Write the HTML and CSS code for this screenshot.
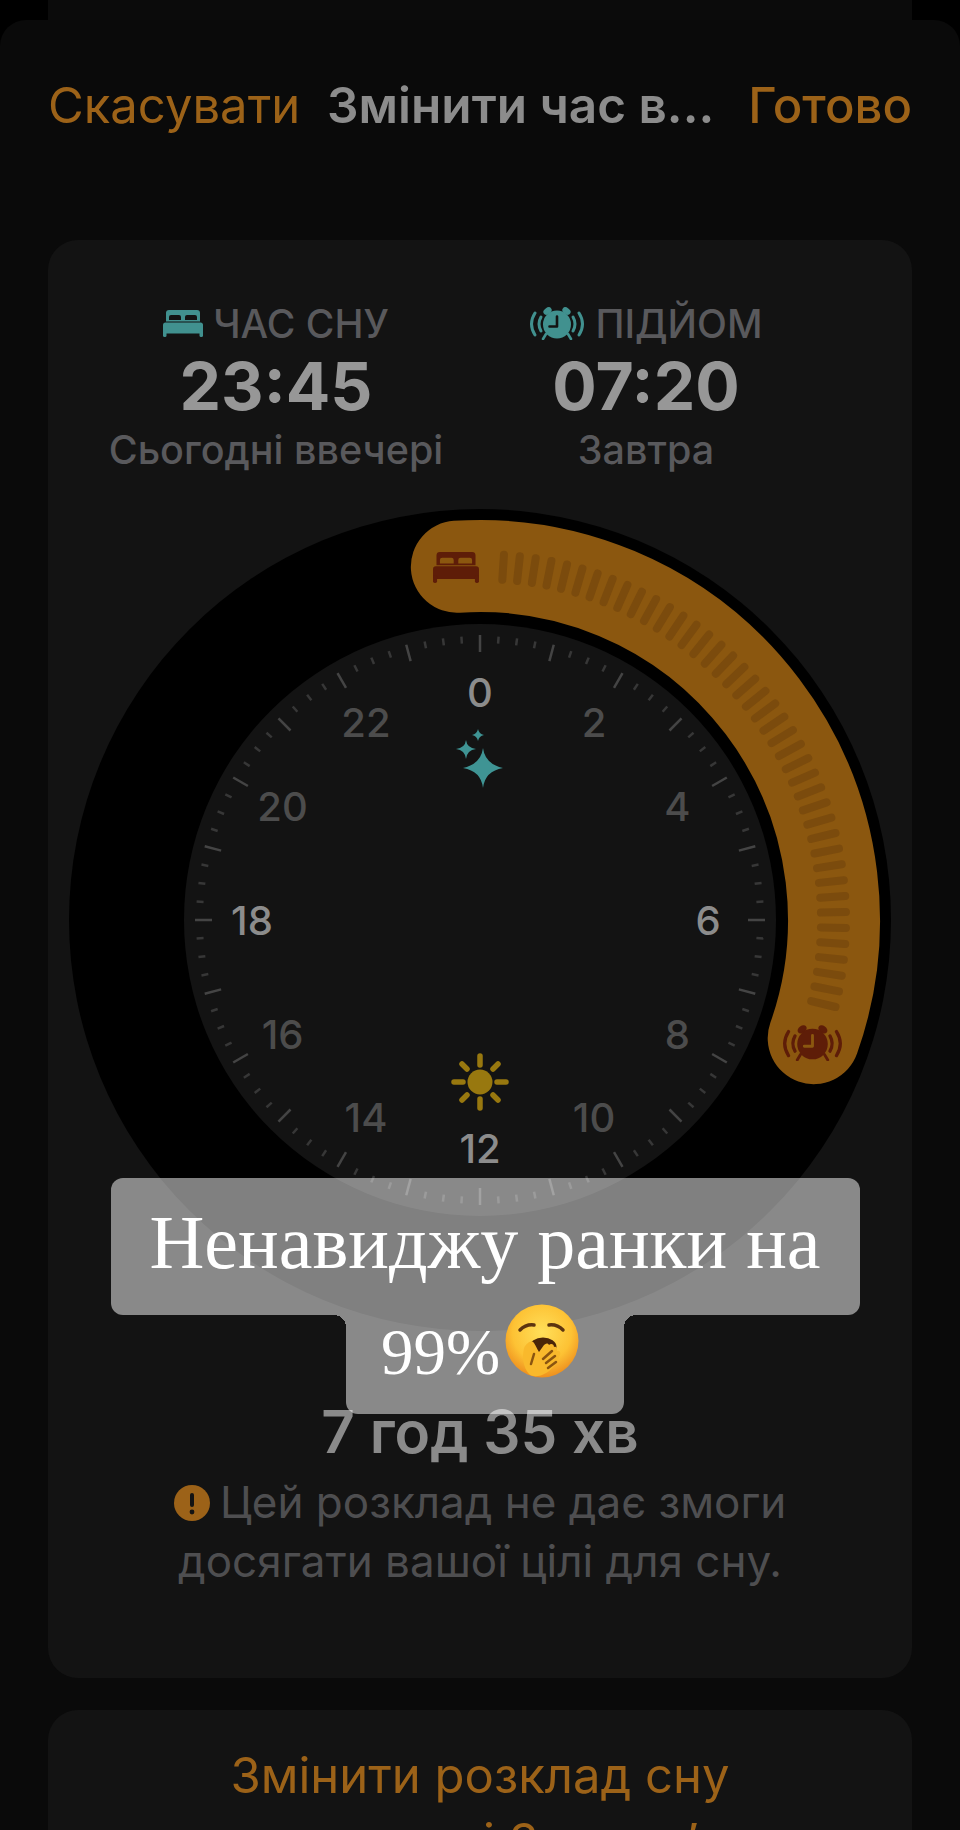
FILE: index.html
```html
<!DOCTYPE html>
<html lang="uk">
<head>
    <meta charset="UTF-8">
    <meta name="viewport" content="width=device-width, initial-scale=1.0">
    <title>Змінити час сну</title>
    <link rel="stylesheet" href="styles.css">
</head>
<body>
    <svg class="icon-defs" width="0" height="0">
        <symbol id="bed" viewBox="0 0 40 27">
            <path fill-rule="evenodd" d="M6 0h28a3 3 0 0 1 3 3v8.500H3V3a3 3 0 0 1 3-3zM8 5a2 2 0 0 0-2 2v3h12V7a2 2 0 0 0-2-2zM24 5a2 2 0 0 0-2 2v3h12V7a2 2 0 0 0-2-2z"/>
            <rect x="0" y="12.500" width="40" height="11" rx="2.500"/>
            <rect x="0" y="20" width="3.500" height="7" rx="1.500"/>
            <rect x="36.500" y="20" width="3.500" height="7" rx="1.500"/>
        </symbol>
        <symbol id="alarm" viewBox="0 0 56 33">
            <ellipse cx="18.500" cy="4" rx="4.500" ry="3.200" transform="rotate(-35 18.500 4)"/>
            <ellipse cx="37.500" cy="4" rx="4.500" ry="3.200" transform="rotate(35 37.500 4)"/>
            <path d="M17 27l-3 5M39 27l3 5" stroke="currentColor" stroke-width="2.600" stroke-linecap="round"/>
            <circle cx="28" cy="17.500" r="14"/>
            <path class="alarm-hands" d="M28 9.500v10h-7.500"/>
            <g class="alarm-waves">
                <path d="M6 6Q-1 17 6 28"/>
                <path d="M12 10Q8 17 12 24"/>
                <path d="M50 6Q57 17 50 28"/>
                <path d="M44 10Q48 17 44 24"/>
            </g>
        </symbol>
    </svg>

    <div class="peek"></div>
    <main class="sheet">
        <header class="top-bar">
            <span class="top-action">Скасувати</span>
            <span class="top-title">Змінити час в...</span>
            <span class="top-action top-done">Готово</span>
        </header>

        <section class="card schedule">
            <div class="times">
                <div class="time-col">
                    <p class="time-label">
                        <svg class="label-icon bed-icon"><use href="#bed"/></svg>
                        ЧАС СНУ
                    </p>
                    <p class="time-value">23:45</p>
                    <p class="time-day">Сьогодні ввечері</p>
                </div>
                <div class="time-col">
                    <p class="time-label">
                        <svg class="label-icon alarm-icon"><use href="#alarm"/></svg>
                        ПІДЙОМ
                    </p>
                    <p class="time-value">07:20</p>
                    <p class="time-day">Завтра</p>
                </div>
            </div>

            <svg class="dial" id="dial" viewBox="0 0 864 840" width="864" height="840">
                <circle cx="432" cy="420" r="411" class="dial-ring"/>
                <circle cx="432" cy="420" r="296" class="dial-face"/>
                <g id="face-ticks"></g>
                <g id="face-labels"></g>

                <path class="sparkle" d="M435 248q2 16 20 20q-18 3-20 20q-2-17-20-20q18-4 20-20z"/>
                <path class="sparkle" d="M418 240q1 8 10 9q-9 1-10 10q-1-9-10-10q9-1 10-9z"/>
                <path class="sparkle" d="M430 229q1 5 6 6q-5 1-6 6q-1-5-6-6q5-1 6-6z"/>

                <g class="sun">
                    <circle cx="432" cy="582" r="12.500"/>
                    <path d="M432 556v9M432 599v9M406 582h9M449 582h9M414 564l5 5M445 595l5 5M450 564l-5 5M419 595l-5 5"/>
                </g>

                <path id="sleep-arc" class="sleep-arc"/>
                <g id="arc-ticks"></g>
                <use href="#bed" class="arc-icon" x="385" y="52" width="46" height="31"/>
                <use href="#alarm" class="arc-icon arc-alarm" x="733" y="525" width="63" height="36"/>
            </svg>

            <p class="duration">7 год 35 хв</p>
            <p class="warning">
                <svg class="warning-icon" viewBox="0 0 36 36">
                    <circle cx="18" cy="18" r="18"/>
                    <rect x="16" y="8" width="4" height="14" rx="2" class="warning-mark"/>
                    <circle cx="18" cy="27" r="2.400" class="warning-mark"/>
                </svg>
                Цей розклад не дає змоги<br>досягати вашої цілі для сну.
            </p>
        </section>

        <section class="card change">
            <p>Змінити розклад сну<br>у програмі Здоров’я</p>
        </section>
    </main>

    <div class="sticker">
        <div class="sticker-line sticker-wide">Ненавиджу ранки на</div>
        <div class="sticker-line sticker-narrow">
            <span class="sticker-percent">99%</span>
            <svg class="yawn" viewBox="0 0 74 74">
                <defs>
                    <radialGradient id="yawn-face" cx="50%" cy="38%" r="62%">
                        <stop offset="0" stop-color="#ffdf5a"/>
                        <stop offset="0.65" stop-color="#fdc234"/>
                        <stop offset="1" stop-color="#ee8f1e"/>
                    </radialGradient>
                </defs>
                <circle cx="37" cy="37" r="36.500" fill="url(#yawn-face)"/>
                <path class="yawn-eye" d="M15 26q6-6 14-5"/>
                <path class="yawn-eye" d="M44 21q8-1 14 5"/>
                <ellipse cx="38" cy="43" rx="13.500" ry="9.500" fill="#4a2508"/>
                <path class="yawn-hand" d="M19 44c-2 9-1 19 5 26c3 3 10 3 15 0c7-3 13-10 16-19c1-3-1-5-3-4c1-3-1-5-3-4c0-3-3-4-5-2c-1-2-3-2-5 0l-5 7c-2-3-3-6-5-9c-2-3-5-1-6 0c-2 1-3 3-4 5z"/>
                <path class="yawn-gap" d="M29 50l-3 10M38 55l9-8M41 59l9-7M43 64l8-6"/>
            </svg>
        </div>
    </div>

    <script src="script.js"></script>
</body>
</html>
```

FILE: styles.css
```css
*{
    margin: 0;
    padding: 0;
    box-sizing: border-box;
    font-family: Inter, "Noto Sans", sans-serif;
}
html, body{
    height: 1830px;
    overflow: hidden;
}
body{
    position: relative;
    background: #000;
}
.icon-defs{
    position: absolute;
}
.peek{
    height: 20px;
    margin: 0 48px;
    background: #0b0b0b;
}
.sheet{
    padding: 57px 48px 0;
    background: #0a0a0a;
    border-radius: 26px 26px 0 0;
}
.top-bar{
    display: flex;
    align-items: center;
    justify-content: space-between;
    height: 56px;
    margin-bottom: 107px;
    font-size: 49px;
}
.top-action{
    color: #9c6218;
}
.top-done{
    font-weight: 500;
}
.top-title{
    margin-right: 7px;
    color: #8c8c8c;
    font-weight: 600;
    font-size: 49.500px;
}
.card{
    background: #131313;
    border-radius: 30px;
}
.schedule{
    height: 1438px;
    padding-top: 63px;
}
.times{
    display: grid;
    grid-template-columns: 370px 370px;
    padding-left: 43px;
}
.time-col{
    text-align: center;
}
.time-label{
    display: flex;
    align-items: center;
    justify-content: center;
    gap: 10px;
    height: 40px;
    font-size: 39px;
    font-weight: 500;
    color: #59595c;
}
.label-icon{
    color: #41918f;
    fill: currentColor;
}
.bed-icon{
    width: 40px;
    height: 27px;
    margin-top: 1px;
}
.alarm-icon{
    width: 56px;
    height: 33px;
    --hands: #131313;
}
.time-value{
    margin-top: 11px;
    font-size: 66px;
    line-height: 64px;
    font-weight: 700;
    color: #979797;
}
.time-day{
    margin-top: 10px;
    font-size: 39.500px;
    line-height: 44px;
    font-weight: 500;
    color: #59595c;
}
.dial{
    display: block;
    margin-top: 28px;
}
.dial-ring{
    fill: #000;
}
.dial-face{
    fill: #131313;
}
.tick-long{
    stroke: #444;
    stroke-width: 2.500;
}
.tick-short{
    stroke: #373737;
    stroke-width: 2.500;
}
.hour{
    font-size: 40px;
    font-weight: 500;
    text-anchor: middle;
    dominant-baseline: central;
    fill: #4c4c4c;
}
.hour-main{
    fill: #8c8c8c;
}
.sparkle{
    fill: #3f9494;
}
.sun{
    fill: #98780f;
}
.sun path{
    fill: none;
    stroke: #98780f;
    stroke-width: 5.500;
    stroke-linecap: round;
}
.sleep-arc{
    fill: none;
    stroke: #8b570f;
    stroke-width: 92;
    stroke-linecap: round;
}
.arc-tick{
    stroke: #7b4b0d;
    stroke-width: 8;
    stroke-linecap: round;
}
.arc-icon{
    color: #5e1d08;
    fill: currentColor;
}
.arc-alarm{
    --hands: #8b570f;
}
.alarm-hands{
    fill: none;
    stroke: var(--hands);
    stroke-width: 2.600;
    stroke-linecap: round;
    stroke-linejoin: round;
}
.alarm-waves path{
    fill: none;
    stroke: currentColor;
    stroke-width: 3;
    stroke-linecap: round;
}
.duration{
    margin-top: 62px;
    text-align: center;
    font-size: 58.500px;
    line-height: 60px;
    font-weight: 600;
    color: #8a8a8a;
}
.warning{
    margin-top: 11px;
    text-align: center;
    font-size: 44px;
    line-height: 59px;
    color: #4e4e50;
}
.warning-icon{
    width: 36px;
    height: 36px;
    margin-right: -2px;
    vertical-align: -3px;
    fill: #9c6218;
}
.warning-mark{
    fill: #131313;
}
.change{
    margin-top: 32px;
    padding: 33px 0;
    text-align: center;
    font-size: 49px;
    line-height: 66px;
    color: #9c6218;
}
.sticker{
    position: absolute;
    top: 1178px;
    left: 5px;
    width: 960px;
    display: flex;
    flex-direction: column;
    align-items: center;
}
.sticker-line{
    display: flex;
    position: relative;
    background: rgba(255,255,255,0.5);
    color: #fff;
    font-family: "Liberation Serif", serif;
    font-size: 76px;
}
.sticker-wide{
    align-items: center;
    justify-content: center;
    width: 749px;
    height: 137px;
    padding-bottom: 8px;
    border-radius: 12px;
}
.sticker-narrow{
    align-items: flex-start;
    justify-content: center;
    width: 278px;
    height: 99px;
    padding-right: 10px;
    border-radius: 0 0 12px 12px;
}
.sticker-narrow::before,
.sticker-narrow::after{
    content: "";
    position: absolute;
    top: 0;
    width: 12px;
    height: 12px;
}
.sticker-narrow::before{
    right: 100%;
    background: radial-gradient(circle at 0 100%, transparent 12px, rgba(255,255,255,0.5) 12px);
}
.sticker-narrow::after{
    left: 100%;
    background: radial-gradient(circle at 100% 100%, transparent 12px, rgba(255,255,255,0.5) 12px);
}
.sticker-percent{
    margin-top: -3px;
    font-family: "Liberation Serif", serif;
    font-size: 65px;
    line-height: 80px;
}
.yawn{
    width: 74px;
    height: 74px;
    margin-left: 5px;
    margin-top: -11px;
}
.yawn-eye{
    fill: none;
    stroke: #5c3410;
    stroke-width: 3.500;
    stroke-linecap: round;
}
.yawn-hand{
    fill: #f9b92c;
}
.yawn-gap{
    fill: none;
    stroke: #8a5410;
    stroke-width: 2.500;
    stroke-linecap: round;
}
```

FILE: script.js
```js
const NS = 'http://www.w3.org/2000/svg';
const CX = 432;
const CY = 420;

// angle in degrees, 0 at the top of the dial, clockwise
function point(angle, r) {
    const rad = angle * Math.PI / 180;
    return [CX + r * Math.sin(rad), CY - r * Math.cos(rad)];
}

function add(parent, tag, attrs, text) {
    const el = document.createElementNS(NS, tag);
    for (const key in attrs) el.setAttribute(key, attrs[key]);
    if (text !== undefined) el.textContent = text;
    parent.appendChild(el);
}

function radial(parent, angle, r1, r2, cls) {
    const [x1, y1] = point(angle, r1);
    const [x2, y2] = point(angle, r2);
    add(parent, 'line', { x1, y1, x2, y2, class: cls });
}

const faceTicks = document.getElementById('face-ticks');
for (let i = 0; i < 96; i++) {
    if (i % 4 === 0) radial(faceTicks, i * 3.75, 268, 285, 'tick-long');
    else radial(faceTicks, i * 3.75, 277, 284, 'tick-short');
}

const faceLabels = document.getElementById('face-labels');
for (let h = 0; h < 24; h += 2) {
    const [x, y] = point(h * 15, 228);
    const cls = h % 6 === 0 ? 'hour hour-main' : 'hour';
    add(faceLabels, 'text', { x, y, class: cls }, h);
}

// bedtime 23:45, wake up 07:20
const start = point(-3.75, 354);
const end = point(109.500, 354);
document.getElementById('sleep-arc').setAttribute('d',
    `M${start[0]} ${start[1]}A354 354 0 0 1 ${end[0]} ${end[1]}`);

const arcTicks = document.getElementById('arc-ticks');
for (let a = 3.75; a <= 103.75; a += 2.5) {
    radial(arcTicks, a, 341, 366, 'arc-tick');
}
```
